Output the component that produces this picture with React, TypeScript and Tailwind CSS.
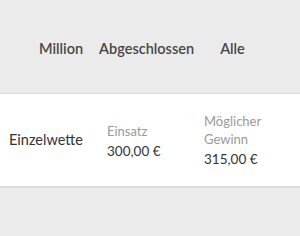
import React from 'react';

export default function App() {
  return (
    <div className="flex h-[236px] w-[300px] flex-col bg-[#ebebeb] font-['Lato',sans-serif]">
      {/* Tabs */}
      <div className="flex h-[93px] items-center pl-[39px] pt-[4px] text-[14.5px] font-semibold text-[#474747]">
        <span>Million</span>
        <span className="ml-[16px]">Abgeschlossen</span>
        <span className="ml-[26px]">Alle</span>
      </div>

      {/* Bet row */}
      <div className="flex h-[95px] items-center border-y border-b-2 border-[#dcdcdc] bg-white">
        <div className="w-[107px] pl-[9px] text-[14.5px] text-[#333]">Einzelwette</div>
        <div className="w-[97px] pt-[1px]">
          <div className="text-[13px] leading-[20px] text-[#9a9a9a]">Einsatz</div>
          <div className="text-[13.5px] leading-[20px] text-[#333]">300,00 €</div>
        </div>
        <div className="w-[62px] pt-[2px]">
          <div className="text-[13px] leading-[18px] text-[#9a9a9a]">Möglicher Gewinn</div>
          <div className="text-[13.5px] leading-[22px] text-[#333]">315,00 €</div>
        </div>
      </div>
    </div>
  );
}
